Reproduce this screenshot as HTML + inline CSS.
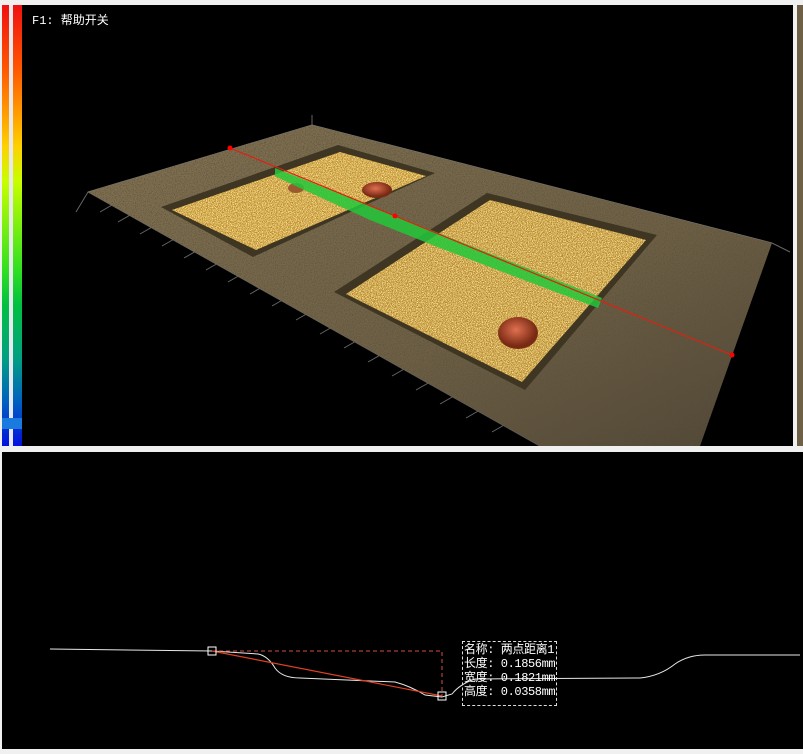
<!DOCTYPE html>
<html><head><meta charset="utf-8"><style>
body{margin:0;width:803px;height:749px;background:#f0f0f0;overflow:hidden;position:relative;font-family:"Liberation Mono","Noto Sans CJK SC",monospace}
.bar{position:absolute;left:2px;top:5px;width:20px;height:441px;background:linear-gradient(#f01010 0%,#ff5a00 15%,#ffd000 32%,#c8ff00 40%,#30e020 60%,#00c040 68%,#00a080 80%,#0060c0 90%,#0010e0 100%)}
.bar i{position:absolute;left:7px;top:0;width:4px;height:100%;background:#e8e8f0}
.bar b{position:absolute;left:0;top:413px;width:20px;height:11px;background:#1a7ae0}
.top{position:absolute;left:22px;top:5px;width:771px;height:441px;background:#000}
.bot{position:absolute;left:2px;top:452px;width:801px;height:297px;background:#000}
.rs{position:absolute;left:797px;top:5px;width:6px;height:441px;background:#6e6046}
.lab{position:absolute;left:462px;top:641px;width:95px;height:65px;border:1px dashed #ddd;color:#fff;font-size:12px;line-height:14px;padding:1px 0 0 1px;box-sizing:border-box;white-space:nowrap;letter-spacing:-0.4px}
</style></head><body>
<div class="bar"><i></i><b></b></div>
<div class="top">
<svg width="771" height="441" viewBox="22 5 771 441">
<defs>
<filter id="n" x="0" y="0" width="100%" height="100%"><feTurbulence type="fractalNoise" baseFrequency="0.9" numOctaves="2"/><feColorMatrix type="matrix" values="0 0 0 0 0.1  0 0 0 0 0.08  0 0 0 0 0.05  0 0 0 -2.2 1.3"/><feComposite in2="SourceGraphic" operator="in"/></filter>
<filter id="g" x="0" y="0" width="100%" height="100%"><feTurbulence type="fractalNoise" baseFrequency="1.2" numOctaves="1"/><feColorMatrix type="matrix" values="0 0 0 0 1  0 0 0 0 0.85  0 0 0 0 0.4  0 0 0 -3 1.9"/><feComposite in2="SourceGraphic" operator="in"/></filter>
<radialGradient id="d" cx="0.45" cy="0.4"><stop offset="0" stop-color="#e07050"/><stop offset="1" stop-color="#7a2a14"/></radialGradient>
<linearGradient id="pl" x1="0" y1="0" x2="1" y2="1"><stop offset="0" stop-color="#857452"/><stop offset="0.6" stop-color="#6e6044"/><stop offset="1" stop-color="#4e4434"/></linearGradient>
</defs>
<g stroke="#666" stroke-width="1" fill="none">
<path d="M76 212 L88 192 L540 446 M312 125 L312 115 M772 243 L790 252"/>
<path d="M100 212 L112 205 M118 222 L132 214 M140 234 L154 226 M162 246 L176 238 M184 258 L198 250 M206 270 L220 262 M228 282 L242 274 M250 294 L264 286 M272 306 L286 298 M296 320 L310 312 M320 334 L334 326 M344 348 L358 340 M368 362 L382 354 M392 376 L406 368 M416 390 L430 382 M440 404 L454 396 M466 418 L480 410 M492 432 L506 424"/>
<path d="M88 192 L312 125 L772 243" stroke="#777"/>
</g>
<polygon points="88,192 312,125 772,243 700,446 540,446" fill="url(#pl)"/>
<polygon points="88,192 312,125 772,243 700,446 540,446" fill="#000" filter="url(#n)"/>
<polygon points="161,207 338,145 435,173 253,257" fill="#3e3622"/>
<polygon points="172,210 340,152 426,176 256,250" fill="#b8841e"/>
<polygon points="172,210 340,152 426,176 256,250" fill="#000" filter="url(#g)"/>
<polygon points="334,292 487,193 657,235 525,390" fill="#3e3622"/>
<polygon points="346,294 490,200 646,240 522,382" fill="#b07e1e"/>
<polygon points="346,294 490,200 646,240 522,382" fill="#000" filter="url(#g)"/>
<ellipse cx="377" cy="190" rx="15" ry="8" fill="url(#d)"/>
<ellipse cx="518" cy="333" rx="20" ry="16" fill="url(#d)"/>
<ellipse cx="296" cy="188" rx="8" ry="5" fill="#9a5a30"/>
<polygon points="275,168 602,298 598,308 440,248 370,220 300,188 275,176" fill="#22c83a" opacity="0.85"/>
<line x1="230" y1="148" x2="732" y2="355" stroke="#e02010" stroke-width="1.2"/>
<circle cx="230" cy="148" r="2.5" fill="#f00"/><circle cx="395" cy="216" r="2.5" fill="#f00"/><circle cx="732" cy="355" r="2.5" fill="#f00"/>
<text x="32" y="24" fill="#fff" font-size="12" font-family="Liberation Mono,'Noto Sans CJK SC',monospace">F1: 帮助开关</text>
</svg>
</div>
<div class="rs"></div>
<div class="bot">
<svg width="801" height="297" viewBox="2 452 801 297">
<path d="M50 649 L212 651 L258 654 Q268 656 275 668 Q282 678 300 678 L395 682 Q410 686 425 695 L442 697 L452 694 Q460 684 475 679 L640 678 Q660 676 675 664 Q688 655 705 655 L800 655" fill="none" stroke="#e8e8e8" stroke-width="1"/>
<path d="M212 651 L442 651 L442 696" fill="none" stroke="#d05040" stroke-dasharray="4 3"/>
<line x1="212" y1="651" x2="442" y2="696" stroke="#e04020" stroke-width="1.2"/>
<rect x="208" y="647" width="8" height="8" fill="none" stroke="#fff"/>
<rect x="438" y="692" width="8" height="8" fill="none" stroke="#fff"/>
</svg>
</div>
<div class="lab">名称: 两点距离1<br>长度: 0.1856mm<br>宽度: 0.1821mm<br>高度: 0.0358mm</div>
</body></html>
